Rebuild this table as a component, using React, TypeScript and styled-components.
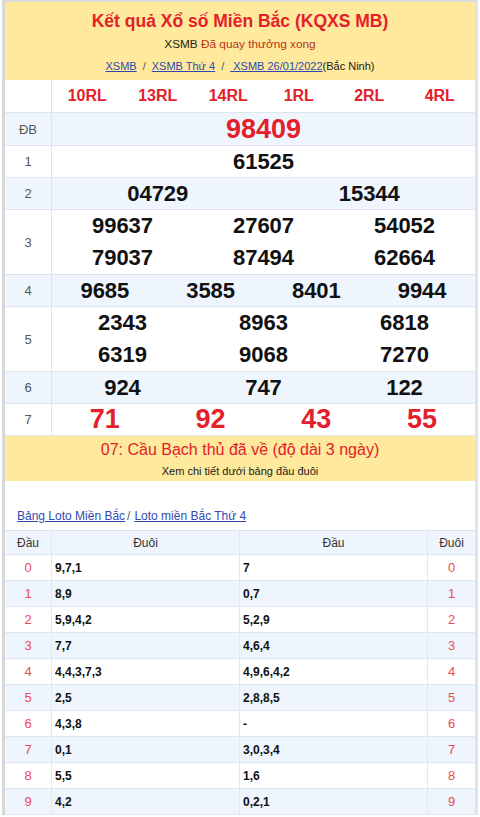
import React from "react";
import styled, { createGlobalStyle } from "styled-components";

const GlobalStyle = createGlobalStyle`
  html, body { margin: 0; padding: 0; background: #ffffff; }
  body { font-family: "Liberation Sans", Arial, sans-serif; color: #222; }
  * { box-sizing: border-box; }
`;

const Frame = styled.div`
  margin-left: 2px;
  width: 476px;
  border-left: 3px solid #d6d8dc;
  border-right: 3px solid #dfe3ea;
  border-top: 2px solid #dcdcdc;
  background: #fff;
`;

const Header = styled.div`
  background: #fee99c;
  text-align: center;
  padding: 7px 0 3px;
`;

const Title = styled.h1`
  margin: 0;
  font-size: 17.5px;
  line-height: 24px;
  font-weight: bold;
  color: #e3202b;
`;

const Status = styled.div`
  font-size: 11.8px;
  line-height: 22px;
  color: #222;
`;

const StatusDone = styled.span`
  color: #b83224;
`;

const Crumbs = styled.div`
  font-size: 11px;
  line-height: 22px;
  color: #222;
`;

const Link = styled.a`
  color: #3049b0;
  text-decoration: underline;
`;

const Sep = styled.span`
  padding: 0 6px;
  color: #555;
`;

const Row = styled.div<{ $alt?: boolean; $h: number }>`
  display: flex;
  height: ${(p) => p.$h}px;
  border-bottom: 1px solid #dfe5ec;
  background: ${(p) => (p.$alt ? "#eef5fd" : "#ffffff")};
`;

const Label = styled.div<{ $alt?: boolean }>`
  width: 47px;
  flex: none;
  border-right: 1px solid #dfe5ec;
  background: ${(p) => (p.$alt ? "#eef5fd" : "#ffffff")};
  display: flex;
  align-items: center;
  justify-content: center;
  font-size: 13px;
  color: #555;
`;

const Cells = styled.div<{ $cols: number }>`
  flex: 1;
  display: grid;
  grid-template-columns: repeat(${(p) => p.$cols}, 1fr);
  align-content: center;
`;

type Kind = "head" | "special" | "normal" | "last";

const Num = styled.div<{ $kind: Kind; $lh: number }>`
  text-align: center;
  font-weight: bold;
  line-height: ${(p) => p.$lh}px;
  font-size: ${(p) =>
    p.$kind === "head" ? 16 : p.$kind === "special" ? 27 : p.$kind === "last" ? 27 : 22}px;
  color: ${(p) => (p.$kind === "normal" ? "#111" : "#e3202b")};
`;

const Notice = styled.div`
  background: #fee99c;
  text-align: center;
  height: 45px;
  padding-top: 3px;
`;

const NoticeTitle = styled.div`
  font-size: 16px;
  line-height: 22px;
  color: #e3202b;
`;

const NoticeSub = styled.div`
  font-size: 11px;
  line-height: 20px;
  color: #222;
`;

const LotoLinks = styled.div`
  padding: 27px 0 0 12px;
  height: 49px;
  font-size: 12px;
  line-height: 16px;
  color: #555;
`;

const LotoSep = styled.span`
  padding: 0 4px 0 2px;
`;

const LotoTable = styled.div`
  display: grid;
  grid-template-columns: 47px 188px 188px 1fr;
  border-top: 1px solid #dfe5ec;
`;

const LotoCell = styled.div<{ $alt?: boolean; $head?: boolean; $align: "center" | "left"; $last?: boolean }>`
  height: ${(p) => (p.$head ? 24 : 26)}px;
  display: flex;
  align-items: center;
  justify-content: ${(p) => (p.$align === "center" ? "center" : "flex-start")};
  padding-left: ${(p) => (p.$align === "left" ? 3 : 0)}px;
  border-bottom: 1px solid #dfe5ec;
  border-right: ${(p) => (p.$last ? "none" : "1px solid #e3e8ee")};
  background: ${(p) => (p.$alt || p.$head ? "#eef5fd" : "#ffffff")};
  font-size: 12px;
  color: #333;
`;

const LotoKey = styled.span`
  font-size: 13px;
  color: #ea4b55;
`;

const LotoVal = styled.span`
  font-size: 12px;
  font-weight: bold;
  color: #111;
`;

const rows: { label: string; cols: number; nums: string[]; kind: Kind; h: number }[] = [
  { label: "ĐB", cols: 1, nums: ["98409"], kind: "special", h: 33 },
  { label: "1", cols: 1, nums: ["61525"], kind: "normal", h: 32 },
  { label: "2", cols: 2, nums: ["04729", "15344"], kind: "normal", h: 32 },
  { label: "3", cols: 3, nums: ["99637", "27607", "54052", "79037", "87494", "62664"], kind: "normal", h: 65 },
  { label: "4", cols: 4, nums: ["9685", "3585", "8401", "9944"], kind: "normal", h: 32 },
  { label: "5", cols: 3, nums: ["2343", "8963", "6818", "6319", "9068", "7270"], kind: "normal", h: 65 },
  { label: "6", cols: 3, nums: ["924", "747", "122"], kind: "normal", h: 32 },
  { label: "7", cols: 4, nums: ["71", "92", "43", "55"], kind: "last", h: 32 },
];

const loto: [string, string][] = [
  ["9,7,1", "7"],
  ["8,9", "0,7"],
  ["5,9,4,2", "5,2,9"],
  ["7,7", "4,6,4"],
  ["4,4,3,7,3", "4,9,6,4,2"],
  ["2,5", "2,8,8,5"],
  ["4,3,8", "-"],
  ["0,1", "3,0,3,4"],
  ["5,5", "1,6"],
  ["4,2", "0,2,1"],
];

export default function App() {
  return (
    <>
      <GlobalStyle />
      <Frame>
        <Header>
          <Title>Kết quả Xổ số Miền Bắc (KQXS MB)</Title>
          <Status>
            XSMB <StatusDone>Đã quay thưởng xong</StatusDone>
          </Status>
          <Crumbs>
            <Link href="#">XSMB</Link>
            <Sep>/</Sep>
            <Link href="#">XSMB Thứ 4</Link>
            <Sep>/</Sep>
            <Link href="#">&nbsp;XSMB 26/01/2022</Link>(Bắc Ninh)
          </Crumbs>
        </Header>

        <Row $h={33}>
          <Label />
          <Cells $cols={6}>
            {["10RL", "13RL", "14RL", "1RL", "2RL", "4RL"].map((c) => (
              <Num key={c} $kind="head" $lh={32}>
                {c}
              </Num>
            ))}
          </Cells>
        </Row>

        {rows.map((r, i) => {
          const alt = i % 2 === 0;
          const lines = r.h > 40 ? 2 : 1;
          return (
            <Row key={r.label} $alt={alt} $h={r.h}>
              <Label $alt={alt}>{r.label}</Label>
              <Cells $cols={r.cols}>
                {r.nums.map((n, j) => (
                  <Num key={j} $kind={r.kind} $lh={(r.h - 1) / lines}>
                    {n}
                  </Num>
                ))}
              </Cells>
            </Row>
          );
        })}

        <Notice>
          <NoticeTitle>07: Cầu Bạch thủ đã về (độ dài 3 ngày)</NoticeTitle>
          <NoticeSub>Xem chi tiết dưới bảng đầu đuôi</NoticeSub>
        </Notice>

        <LotoLinks>
          <Link href="#">Bảng Loto Miền Bắc</Link>
          <LotoSep>/</LotoSep>
          <Link href="#">Loto miền Bắc Thứ 4</Link>
        </LotoLinks>

        <LotoTable>
          <LotoCell $head $align="center">Đầu</LotoCell>
          <LotoCell $head $align="center">Đuôi</LotoCell>
          <LotoCell $head $align="center">Đầu</LotoCell>
          <LotoCell $head $align="center" $last>Đuôi</LotoCell>
          {loto.map(([a, b], i) => {
            const alt = i % 2 === 1;
            return (
              <React.Fragment key={i}>
                <LotoCell $alt={alt} $align="center">
                  <LotoKey>{i}</LotoKey>
                </LotoCell>
                <LotoCell $alt={alt} $align="left">
                  <LotoVal>{a}</LotoVal>
                </LotoCell>
                <LotoCell $alt={alt} $align="left">
                  <LotoVal>{b}</LotoVal>
                </LotoCell>
                <LotoCell $alt={alt} $align="center" $last>
                  <LotoKey>{i}</LotoKey>
                </LotoCell>
              </React.Fragment>
            );
          })}
        </LotoTable>
      </Frame>
    </>
  );
}
